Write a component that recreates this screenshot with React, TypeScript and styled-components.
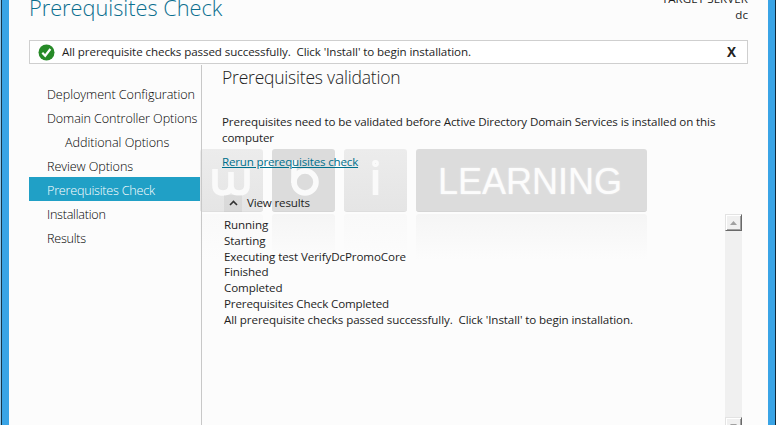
import React from "react";
import styled, { createGlobalStyle } from "styled-components";

const GlobalStyle = createGlobalStyle`
  * { box-sizing: border-box; }
  body {
    margin: 0;
    overflow: hidden;
    background: #fcfcfc;
    color: #1e1e1e;
    font: 400 11.6px/16px "Open Sans", "Noto Sans", sans-serif;
  }
`;

const Window = styled.div`
  position: relative;
  width: 776px;
  height: 425px;
  display: flex;
  overflow: hidden;
  background: #fcfcfc;
`;

const LeftFrame = styled.div`
  flex: 0 0 9px;
  background: linear-gradient(90deg, #8fc4e8 0 1px, #17364a 1px 2px, #39a4e6 2px);
`;

const RightFrame = styled.div`
  flex: 0 0 8px;
  background: linear-gradient(90deg, #39a4e6 0 7px, #10283a 7px);
`;

const Page = styled.div`
  flex: 1;
  min-width: 0;
  display: flex;
  flex-direction: column;
  padding: 0 20px;
`;

const Header = styled.header`
  flex: 0 0 40px;
  display: flex;
  justify-content: space-between;
`;

const Title = styled.h1`
  margin: -7px 0 0;
  font-size: 21.8px;
  font-weight: 300;
  line-height: 30px;
  letter-spacing: -0.03px;
  color: #0b6f8f;
  white-space: nowrap;
`;

const Target = styled.div`
  margin-top: -9px;
  text-align: right;
`;

const Text = styled.div<{ $track?: number }>`
  letter-spacing: ${(p) => p.$track ?? -0.1}px;
  white-space: pre;
`;

const Alert = styled.div`
  flex: 0 0 24px;
  display: flex;
  align-items: center;
  padding: 0 10px 0 8px;
  border: 1px solid #cfcfcf;
  background: #fff;
`;

const AlertText = styled(Text)`
  flex: 1;
  margin-left: 7px;
`;

const Close = styled.button`
  width: 11px;
  padding: 0;
  border: 0;
  background: none;
  color: #222;
  font: 700 13.5px/16px "Open Sans", sans-serif;
`;

const Body = styled.div`
  flex: 1;
  display: flex;
  min-height: 0;
  padding-top: 1px;
`;

const Nav = styled.nav`
  flex: 0 0 172px;
  padding-top: 16px;
`;

const NavItem = styled.div<{ $active?: boolean; $nested?: boolean; $track?: number }>`
  width: 171px;
  height: 24px;
  padding-left: ${(p) => (p.$nested ? 36 : 18)}px;
  font-size: 12.6px;
  font-weight: 300;
  line-height: 28px;
  letter-spacing: ${(p) => p.$track ?? -0.04}px;
  white-space: nowrap;
  background: ${(p) => (p.$active ? "#20a0c6" : "transparent")};
  color: ${(p) => (p.$active ? "#fff" : "#000")};
`;

const Content = styled.main`
  position: relative;
  z-index: 1;
  flex: 1;
  display: flex;
  flex-direction: column;
  padding-left: 20px;
  border-left: 1px solid #c8c8c8;
`;

const Heading = styled.h2`
  margin: 0 0 25px;
  font-size: 17.5px;
  font-weight: 300;
  line-height: 24px;
  letter-spacing: -0.21px;
  color: #222;
`;

const Link = styled(Text)`
  align-self: flex-start;
  margin-top: 8px;
  color: #00708c;
  text-decoration: underline;
  text-underline-offset: 1px;
`;

const Expander = styled.div`
  display: flex;
  height: 17px;
  margin-top: 25px;
  padding-left: 2px;
  gap: 5px;
`;

const ExpanderButton = styled.div`
  width: 18px;
  height: 17px;
  display: flex;
  align-items: center;
  justify-content: center;
  padding-bottom: 2px;
  background: rgba(0, 0, 0, 0.05);
`;

const Results = styled.div`
  flex: 1;
  display: flex;
  justify-content: space-between;
  margin-top: 2px;
  padding: 0 6px 0 2px;
`;

const ResultList = styled.div`
  padding-top: 3px;
  line-height: 15.8px;
`;

const Scrollbar = styled.div`
  width: 17px;
  height: 220px;
  display: flex;
  flex-direction: column;
  justify-content: space-between;
  background: #f0f0f0;
`;

const ScrollButton = styled.div`
  width: 17px;
  height: 17px;
  display: flex;
  align-items: center;
  justify-content: center;
  border: 1px solid;
  border-color: #e3e3e3 #696969 #696969 #e3e3e3;
  background: #f0f0f0;
  box-shadow: inset 1px 1px #fff, inset -1px -1px #a0a0a0;
`;

const Watermark = styled.div`
  position: absolute;
  left: 200px;
  top: 149px;
  display: flex;
  gap: 9px;
`;

const Tile = styled.div<{ $wide?: boolean; $dark?: boolean }>`
  position: relative;
  width: ${(p) => (p.$wide ? 231 : 63)}px;
  height: 63px;
  border-radius: 3px;
  background: ${(p) => (p.$dark ? "#dcdcdc" : "linear-gradient(#ececec, #e5e5e5)")};
  border-bottom: 1px solid ${(p) => (p.$dark ? "#d5d5d5" : "#dedede")};

  &::after {
    content: "";
    position: absolute;
    left: 0;
    right: 0;
    top: 65px;
    height: 46px;
    border-radius: 3px 3px 0 0;
    background: linear-gradient(${(p) => (p.$dark ? "#f5f5f5" : "#f9f9f9")}, #fcfcfc);
  }
`;

const Letter = styled.svg`
  display: block;
  width: 63px;
  height: 62px;
  fill: none;
  stroke: #fafafa;
  stroke-width: 5.6;
`;

const Word = styled.div`
  padding-left: 22px;
  color: #fcfcfc;
  font: 36px/66px "Liberation Sans", sans-serif;
  text-shadow: 0 0 2px rgba(255, 255, 255, 0.6);
`;

const RESULTS: [string, number][] = [
  ["Running", -0.1],
  ["Starting", -0.1],
  ["Executing test VerifyDcPromoCore", -0.1],
  ["Finished", -0.1],
  ["Completed", -0.1],
  ["Prerequisites Check Completed", -0.14],
  ["All prerequisite checks passed successfully.  Click 'Install' to begin installation.", -0.09],
];

export default function App() {
  return (
    <>
      <GlobalStyle />
      <Window>
        <LeftFrame />
        <Page>
          <Header>
            <Title>Prerequisites Check</Title>
            <Target>
              <Text $track={0.05}>TARGET SERVER</Text>
              <Text $track={0}>dc</Text>
            </Target>
          </Header>
          <Alert>
            <svg width="17" height="17" viewBox="0 0 17 17">
              <circle cx="8.5" cy="8.5" r="8" fill="#278a28" />
              <path d="M4.3 8.7 7.2 11.7 12.4 5" fill="none" stroke="#fff" strokeWidth="2.2" />
            </svg>
            <AlertText $track={-0.09}>
              {"All prerequisite checks passed successfully.  Click 'Install' to begin installation."}
            </AlertText>
            <Close>X</Close>
          </Alert>
          <Body>
            <Nav>
              <NavItem>Deployment Configuration</NavItem>
              <NavItem $track={-0.08}>Domain Controller Options</NavItem>
              <NavItem $nested>Additional Options</NavItem>
              <NavItem $track={-0.08}>Review Options</NavItem>
              <NavItem $active $track={-0.22}>Prerequisites Check</NavItem>
              <NavItem $track={-0.25}>Installation</NavItem>
              <NavItem $track={-0.25}>Results</NavItem>
            </Nav>
            <Content>
              <Heading>Prerequisites validation</Heading>
              <Text $track={-0.11}>
                {"Prerequisites need to be validated before Active Directory Domain Services is installed on this\ncomputer"}
              </Text>
              <Link $track={-0.19}>Rerun prerequisites check</Link>
              <Expander>
                <ExpanderButton>
                  <svg width="9" height="6" viewBox="0 0 9 6">
                    <path d="M1 5 4.5 1.5 8 5" fill="none" stroke="#333" strokeWidth="1.6" />
                  </svg>
                </ExpanderButton>
                <Text $track={-0.16}>View results</Text>
              </Expander>
              <Results>
                <ResultList>
                  {RESULTS.map(([line, track]) => (
                    <Text key={line} $track={track}>{line}</Text>
                  ))}
                </ResultList>
                <Scrollbar>
                  <ScrollButton>
                    <svg width="7" height="4" viewBox="0 0 7 4"><path d="M0 4 3.5 0 7 4Z" fill="#a0a0a0" /></svg>
                  </ScrollButton>
                  <ScrollButton>
                    <svg width="7" height="4" viewBox="0 0 7 4"><path d="M0 0 3.5 4 7 0Z" fill="#a0a0a0" /></svg>
                  </ScrollButton>
                </Scrollbar>
              </Results>
            </Content>
          </Body>
        </Page>
        <RightFrame />
        <Watermark>
          <Tile>
            <Letter viewBox="0 0 63 62">
              <path d="M15 20V36Q15 44 23 44T31 36V23M31 36Q31 44 39 44T47 36V20" />
            </Letter>
          </Tile>
          <Tile $dark>
            <Letter viewBox="0 0 63 62">
              <path d="M22 11V34" />
              <circle cx="33" cy="33" r="11" />
            </Letter>
          </Tile>
          <Tile>
            <Letter viewBox="0 0 63 62">
              <path d="M31.5 21V46" />
              <circle cx="31.5" cy="14.5" r="1.4" strokeWidth="4" />
            </Letter>
          </Tile>
          <Tile $wide $dark>
            <Word>LEARNING</Word>
          </Tile>
        </Watermark>
      </Window>
    </>
  );
}
